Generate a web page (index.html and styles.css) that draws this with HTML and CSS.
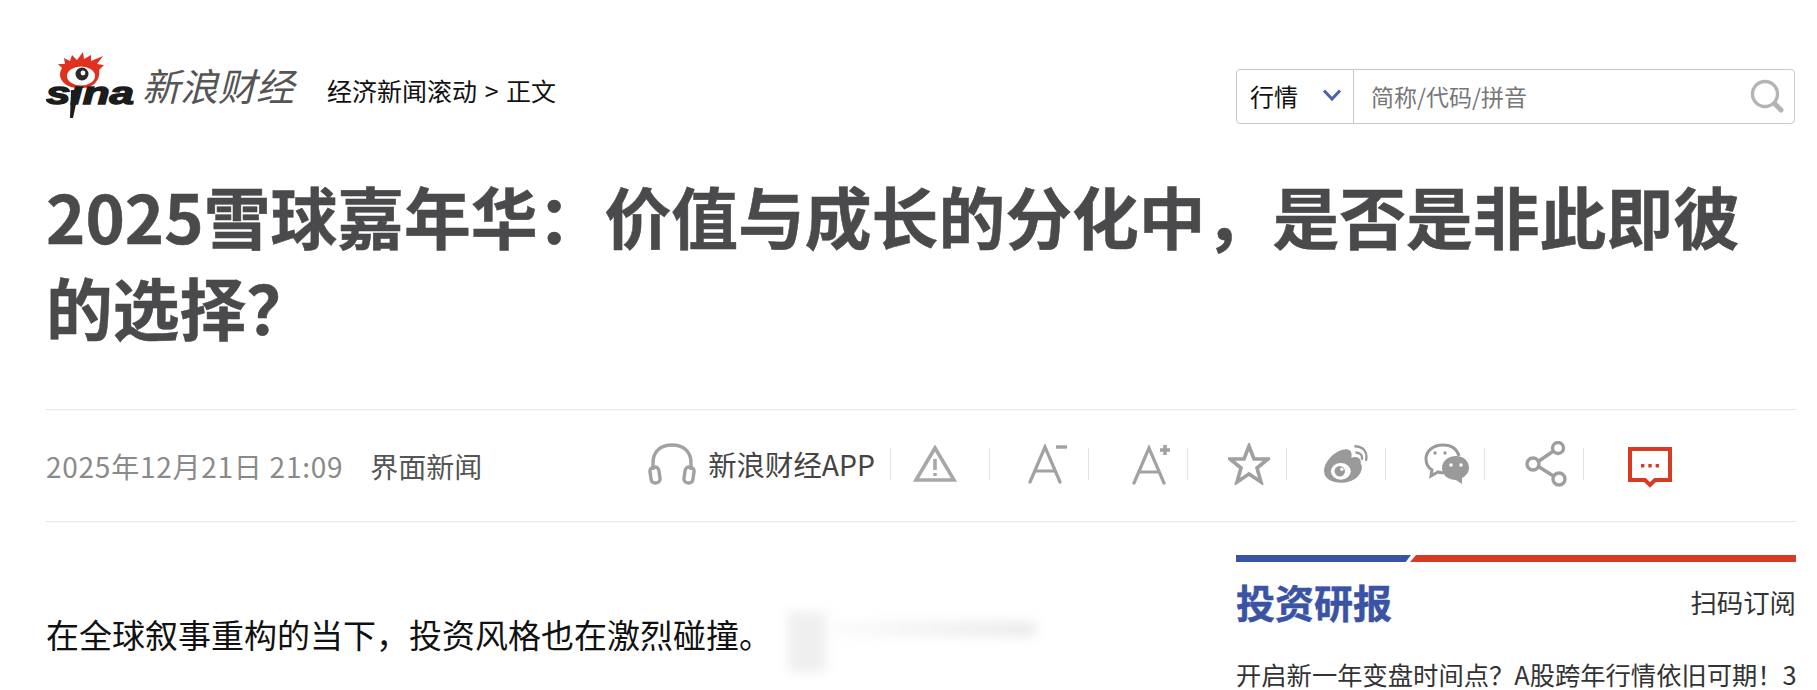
FILE: index.html
```html
<!DOCTYPE html>
<html lang="zh-CN">
<head>
    <meta charset="UTF-8">
    <meta name="viewport" content="width=device-width, initial-scale=1.0">
    <title>2025雪球嘉年华：价值与成长的分化中，是否是非此即彼的选择？</title>
    <link rel="stylesheet" href="styles.css">
</head>
<body>
    <div class="page">
        <header class="top-bar">
            <div class="brand">
                <svg class="sina-logo" viewBox="0 0 90 66" width="90" height="66">
                    <path fill="#e0301e" d="M19 32 C13 27 13 21 16 16 L12 12 L19 12 L18 6 L24 9 L26 3 L31 8 L37 0 L38 7 L45 3 L45 9 L57 4 L51 12 L58 13 L53 18 C54 24 52 29 47 33 C41 37 27 38 19 32 Z"/>
                    <ellipse cx="35" cy="24" rx="14" ry="9.5" fill="#fff"/>
                    <circle cx="36" cy="22" r="6.5" fill="#2a2a2a"/>
                    <circle cx="37" cy="21" r="2.4" fill="#fff"/>
                    <text class="sina-word" x="0" y="52" textLength="88" lengthAdjust="spacingAndGlyphs">sına</text>
                    <path fill="#1c1c1c" d="M25 38 L33 38 L27 66 L24 66 Z"/>
                </svg>
                <span class="brand-name">新浪财经</span>
                <nav class="crumbs">经济新闻滚动 <i class="crumb-sep">&gt;</i> 正文</nav>
            </div>
            <div class="search">
                <div class="search-type">
                    <span>行情</span>
                    <svg viewBox="0 0 20 14" width="20" height="14"><path d="M2 2.5 L10 11 L18 2.5" fill="none" stroke="#4d62a8" stroke-width="3"/></svg>
                </div>
                <div class="search-input">
                    <span>简称/代码/拼音</span>
                    <svg viewBox="0 0 34 34" width="34" height="34"><circle cx="15" cy="15" r="12.5" fill="none" stroke="#b4b4b4" stroke-width="3.4"/><path d="M25 25 L31 31" stroke="#b4b4b4" stroke-width="5" stroke-linecap="round"/></svg>
                </div>
            </div>
        </header>

        <h1 class="title">2025雪球嘉年华：价值与成长的分化中，是否是非此即彼的选择？</h1>

        <div class="meta">
            <div class="source">
                <span class="date">2025年12月21日 21:09</span>
                <span class="media">界面新闻</span>
            </div>
            <div class="tools">
                <div class="tool tool-app">
                    <svg viewBox="0 0 48 44" width="48" height="44"><path d="M5 28 V21 C5 9 13 3 24 3 C35 3 43 9 43 21 V28" fill="none" stroke="#a2a2a2" stroke-width="3.4"/><rect x="2.5" y="25" width="9" height="16" rx="4" transform="rotate(-8 7 33)" fill="none" stroke="#a2a2a2" stroke-width="3.4"/><rect x="36.5" y="25" width="9" height="16" rx="4" transform="rotate(8 41 33)" fill="none" stroke="#a2a2a2" stroke-width="3.4"/></svg>
                    <span>新浪财经APP</span>
                </div>
                <div class="tool tool-warn">
                    <svg viewBox="0 0 44 38" width="44" height="38"><path d="M22 3 L41 35 H3 Z" fill="none" stroke="#a8a8a8" stroke-width="3.6"/><path d="M22 14 V25 M22 28 V31" stroke="#a8a8a8" stroke-width="3.6"/></svg>
                </div>
                <div class="tool tool-small">
                    <svg viewBox="0 0 40 40" width="40" height="40"><path d="M2 38 L17 3 L32 38 M7 27 H27" fill="none" stroke="#a2a2a2" stroke-width="3.2" stroke-linecap="round"/><path d="M28 3 H39" stroke="#a2a2a2" stroke-width="3.4"/></svg>
                </div>
                <div class="tool tool-large">
                    <svg viewBox="0 0 40 42" width="40" height="42"><path d="M2 40 L17 5 L32 40 M7 29 H27" fill="none" stroke="#a2a2a2" stroke-width="3.2" stroke-linecap="round"/><path d="M33 2 V12 M28 7 H38" stroke="#a2a2a2" stroke-width="3.6"/></svg>
                </div>
                <div class="tool">
                    <svg viewBox="0 0 42 42" width="42" height="42"><path d="M21 3 L26 16 L40 16 L29 25 L33 39 L21 31 L9 39 L13 25 L2 16 L16 16 Z" fill="none" stroke="#a0a0a0" stroke-width="3.6"/></svg>
                </div>
                <div class="tool tool-weibo">
                    <svg viewBox="0 0 44 40" width="46" height="42"><path d="M2 27 C2 17 14 6 23 6 C28 6 29 10 28 14 C34 12 38 15 37 20 C40 22 38 37 19 38 C9 38 2 34 2 27 Z" fill="#9a9a9a"/><ellipse cx="18" cy="27" rx="9.5" ry="8" fill="#fff"/><circle cx="17" cy="27" r="5" fill="#9a9a9a"/><circle cx="19" cy="25" r="1.6" fill="#fff"/><path d="M32 9 C37 9 39 12 38 16 M31 3 C40 3 44 9 42 17" fill="none" stroke="#9a9a9a" stroke-width="2.2"/></svg>
                </div>
                <div class="tool">
                    <svg viewBox="0 0 46 42" width="46" height="42"><path d="M19 2 C9 2 2 8 2 16 C2 21 5 25 8 27 L7 33 L14 29 C17 30 20 30 22 29" fill="none" stroke="#9a9a9a" stroke-width="3"/><path d="M19 2 C27 2 33 6 35 13" fill="none" stroke="#9a9a9a" stroke-width="3"/><circle cx="11" cy="10" r="1.7" fill="#9a9a9a"/><circle cx="21" cy="10" r="1.7" fill="#9a9a9a"/><path d="M32 13 C24 13 18 18 18 25 C18 32 24 37 32 37 L38 41 L38 35 C42 33 45 29 45 25 C45 18 40 13 32 13 Z" fill="#9a9a9a"/><circle cx="27" cy="22" r="1.8" fill="#fff"/><circle cx="37" cy="22" r="1.8" fill="#fff"/></svg>
                </div>
                <div class="tool">
                    <svg viewBox="0 0 42 46" width="42" height="46"><path d="M11 22 L30 9 M11 24 L30 36" stroke="#9e9e9e" stroke-width="3.4"/><circle cx="8" cy="23" r="6" fill="#fff" stroke="#9e9e9e" stroke-width="3.4"/><circle cx="33" cy="7" r="5.5" fill="#fff" stroke="#9e9e9e" stroke-width="3.4"/><circle cx="34" cy="38" r="6" fill="#fff" stroke="#9e9e9e" stroke-width="3.4"/></svg>
                </div>
                <div class="tool tool-last">
                    <svg viewBox="0 0 44 44" width="44" height="44"><path d="M2 5 H42 V36 H27 L22 41 L17 36 H2 Z" fill="none" stroke="#d93a24" stroke-width="4"/><path d="M13 20 h3.4 v3.4 h-3.4 Z M20.3 20 h3.4 v3.4 h-3.4 Z M27.6 20 h3.4 v3.4 h-3.4 Z" fill="#d93a24"/></svg>
                </div>
            </div>
        </div>

        <div class="content">
            <article class="article">
                <p>在全球叙事重构的当下，投资风格也在激烈碰撞。</p>
                <div class="smear smear-v"></div>
                <div class="smear smear-h"></div>
            </article>
            <aside class="sidebar">
                <div class="bar">
                    <div class="bar-blue"></div>
                    <div class="bar-red"></div>
                </div>
                <div class="side-head">
                    <h2>投资研报</h2>
                    <span>扫码订阅</span>
                </div>
                <div class="side-item">开启新一年变盘时间点？A股跨年行情依旧可期！3</div>
            </aside>
        </div>
    </div>
</body>
</html>
```

FILE: styles.css
```css
html, body {
    margin: 0;
    height: 690px;
    overflow: hidden;
    background: #fff;
}
body {
    font-family: "Noto Sans CJK SC", "Noto Sans", sans-serif;
    color: #222;
}
.page {
    width: 1750px;
    margin-left: 46px;
}
.top-bar {
    display: flex;
    justify-content: space-between;
    align-items: flex-start;
    padding-top: 51px;
}
.brand {
    display: flex;
    align-items: center;
    height: 68px;
}
.sina-logo {
    flex-shrink: 0;
}
.sina-word {
    font-family: "Liberation Sans", sans-serif;
    font-size: 31px;
    font-weight: bold;
    font-style: italic;
    fill: #1c1c1c;
    stroke: #1c1c1c;
    stroke-width: 1.4px;
}
.brand-name {
    margin-left: 6px;
    margin-top: -2px;
    font-size: 38px;
    font-style: italic;
    color: #555;
}
.crumbs {
    margin-left: 33px;
    margin-top: 9px;
    font-size: 25px;
    color: #111;
}
.crumb-sep {
    font-style: normal;
    margin: 0 2px;
}
.search {
    display: flex;
    width: 559px;
    height: 55px;
    margin-top: 18px;
    margin-right: 1px;
    border: 1px solid #c9c9c9;
    border-radius: 4px;
    box-sizing: border-box;
}
.search-type {
    display: flex;
    align-items: center;
    justify-content: space-between;
    width: 117px;
    padding: 0 11px 3px 13px;
    box-sizing: border-box;
    border-right: 1px solid #c9c9c9;
    font-size: 24px;
    color: #111;
}
.search-input {
    flex: 1;
    display: flex;
    align-items: center;
    justify-content: space-between;
    padding: 0 10px 2px 17px;
    font-size: 23px;
    color: #777;
}
.title {
    margin: 46px 0 0;
    font-size: 66.8px;
    line-height: 91px;
    font-weight: 700;
    color: #4a4a4c;
    -webkit-text-stroke: 0.5px #4a4a4c;
}
.meta {
    display: flex;
    align-items: center;
    justify-content: space-between;
    height: 113px;
    margin-top: 57px;
    border-top: 1px solid #e6e6e6;
    border-bottom: 1px solid #e6e6e6;
    box-sizing: border-box;
}
.source {
    display: flex;
    gap: 27px;
    font-size: 28px;
}
.date {
    color: #8a8a8a;
    letter-spacing: 0.75px;
}
.media {
    color: #555;
}
.tools {
    display: flex;
    align-items: center;
    margin-right: 113px;
    padding-bottom: 4px;
}
.tool {
    display: flex;
    align-items: center;
    justify-content: center;
    width: 99px;
    height: 32px;
    border-right: 1px solid #e2e2e2;
    box-sizing: border-box;
}
.tool svg {
    margin-left: 24px;
}
.tool-app {
    width: auto;
    gap: 12px;
    padding-right: 15px;
    font-size: 28.4px;
    color: #444;
}
.tool-app svg {
    margin-left: 0;
}
.tool-warn svg {
    margin-left: -10px;
}
.tool-small svg {
    margin-left: 18px;
}
.tool-large svg {
    margin-left: 28px;
}
.tool-weibo svg {
    margin-left: 18px;
}
.tool-last {
    border-right: 0;
}
.tool-last svg {
    margin-left: 32px;
    margin-top: 5px;
}
.content {
    display: flex;
    justify-content: space-between;
}
.article {
    position: relative;
    padding-top: 86px;
}
.article p {
    margin: 0;
    font-size: 33px;
    line-height: 52px;
    color: #111;
}
.smear {
    position: absolute;
    filter: blur(6px);
}
.smear-v {
    left: 742px;
    top: 90px;
    width: 38px;
    height: 60px;
    background: #efefef;
}
.smear-h {
    left: 785px;
    top: 100px;
    width: 204px;
    height: 14px;
    background: linear-gradient(to right, #fbfbfb, #e8e8e8);
}
.sidebar {
    width: 560px;
    padding-top: 33px;
}
.bar {
    display: flex;
    height: 7px;
    overflow: hidden;
}
.bar-blue {
    width: 175px;
    background: #3b53a4;
    clip-path: polygon(0 0, 100% 0, 97% 100%, 0 100%);
}
.bar-red {
    flex: 1;
    margin-left: -1px;
    background: #d93a24;
    clip-path: polygon(6px 0, 100% 0, 100% 100%, 0 100%);
}
.side-head {
    display: flex;
    justify-content: space-between;
    align-items: center;
    margin-top: 8px;
}
.side-head h2 {
    margin: 0;
    font-size: 39px;
    line-height: 62px;
    color: #3b53a4;
    -webkit-text-stroke: 0.5px #3b53a4;
}
.side-head span {
    font-size: 26.4px;
    color: #333;
}
.side-item {
    margin-top: 23px;
    font-size: 25.3px;
    line-height: 38px;
    color: #333;
    white-space: nowrap;
}
```
